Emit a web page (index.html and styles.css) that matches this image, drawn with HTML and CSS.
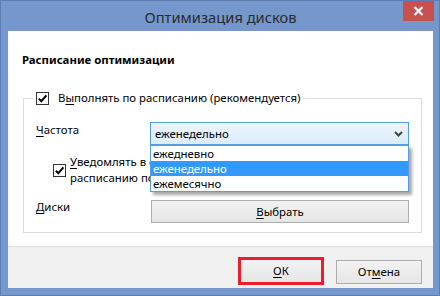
FILE: index.html
```html
<!DOCTYPE html>
<html lang="ru">
<head>
<meta charset="utf-8">
<title>Оптимизация дисков</title>
<link rel="stylesheet" href="styles.css">
</head>
<body>
<div class="window">
  <div class="titlebar">
    <span></span>
    <span class="title">Оптимизация дисков</span>
    <span class="close"><svg width="11" height="10" viewBox="0 0 11 10"><path d="M1.5 1 L9.5 9 M9.5 1 L1.5 9" stroke="#fff" stroke-width="2.2" fill="none"/></svg></span>
  </div>
  <div class="client">
    <div class="content">
      <div class="heading">Расписание оптимизации</div>
      <fieldset class="group">
        <legend class="legend">
          <span class="check"><svg width="11" height="11" viewBox="0 0 11 11"><path d="M1.8 5.6 L4.3 8.2 L9.4 2.4" stroke="#000" stroke-width="2" fill="none"/></svg></span>
          <span>В<u>ы</u>полнять по расписанию (рекомендуется)</span>
        </legend>
        <div class="grid">
          <div class="label"><u>Ч</u>астота</div>
          <div class="combo-wrap">
            <div class="combo">
              <span>еженедельно</span>
              <svg class="chev" width="9" height="6" viewBox="0 0 9 6"><path d="M1 1 L4.5 4.5 L8 1" stroke="#444" stroke-width="2" fill="none"/></svg>
            </div>
            <div class="list">
              <div class="item">ежедневно</div>
              <div class="item selected">еженедельно</div>
              <div class="item">ежемесячно</div>
            </div>
          </div>
          <div class="notify">
            <span class="check"><svg width="11" height="11" viewBox="0 0 11 11"><path d="M1.8 5.6 L4.3 8.2 L9.4 2.4" stroke="#000" stroke-width="2" fill="none"/></svg></span>
            <span class="notify-text"><u>У</u>ведомлять в случае пропуска трех выполнений по расписанию подряд</span>
          </div>
          <div class="label"><u>Д</u>иски</div>
          <div class="btn wide"><span><u>В</u>ыбрать</span></div>
        </div>
      </fieldset>
    </div>
    <div class="footer">
      <div class="btn ok"><span><u>О</u>К</span></div>
      <div class="btn cancel"><span>От<u>м</u>ена</span></div>
    </div>
  </div>
</div>
</body>
</html>
```
FILE: styles.css
```css
* { box-sizing: border-box; }
html, body { margin: 0; padding: 0; }
body {
  width: 440px;
  height: 296px;
  overflow: hidden;
  font-family: "Noto Sans", "Open Sans", sans-serif;
  font-size: 11.4px;
  color: #000;
}
.window {
  width: 440px;
  height: 296px;
  background: #7597cb;
  border: 1px solid #5b7db5;
  padding: 0 6px 7px 7px;
  display: flex;
  flex-direction: column;
}
.titlebar {
  height: 30px;
  display: grid;
  grid-template-columns: 1fr auto 1fr;
  align-items: start;
}
.title {
  font-size: 14.7px;
  line-height: 20px;
  margin-top: 6px;
  color: #2b2b2b;
  white-space: nowrap;
}
.close {
  justify-self: end;
  margin-right: -1px;
  width: 31px;
  height: 20px;
  background: #c75050;
  display: flex;
  align-items: center;
  justify-content: center;
}
.close svg { display: block; }
.client {
  flex: 1;
  background: #fff;
  display: flex;
  flex-direction: column;
}
.content {
  flex: 1;
  padding: 21px 11px 0 14px;
}
.heading {
  font-weight: bold;
  line-height: 16px;
  height: 16px;
}
.group {
  margin: 22px 0 0 1px;
  border: 1px solid #dcdcdc;
  padding: 16px 11px 9px 12px;
  min-width: 0;
}
.legend {
  margin-left: -2px;
  padding: 0 3px 0 2px;
  display: flex;
  align-items: center;
  gap: 9px;
  line-height: 16px;
}
.check {
  width: 13px;
  height: 13px;
  border: 1px solid #333;
  background: #fff;
  display: inline-flex;
  flex: none;
}
.check svg { display: block; }
u { text-decoration: underline; text-underline-offset: 2px; }
.grid {
  display: grid;
  grid-template-columns: 114px 259px;
  row-gap: 0;
}
.label { line-height: 16px; }
.combo-wrap { position: relative; }
.combo {
  height: 23px;
  border: 1px solid #569de5;
  background: linear-gradient(#ebf4fc, #dcecfc);
  display: flex;
  align-items: center;
  justify-content: space-between;
  padding: 0 5px 0 4px;
  line-height: 16px;
}
.chev { display: block; margin-top: 1px; }
.list {
  position: absolute;
  top: 23px;
  left: 0;
  width: 259px;
  background: #fff;
  border: 1px solid #569de5;
  box-shadow: 3px 3px 3px rgba(0,0,0,0.35);
  z-index: 2;
}
.item {
  height: 15px;
  line-height: 15px;
  padding-left: 2px;
}
.item.selected { background: #3399ff; color: #fff; }
.notify {
  grid-column: 1 / 3;
  display: flex;
  align-items: center;
  gap: 4px;
  margin: 9px 0 0 17px;
}
.notify-text {
  line-height: 16px;
  width: 300px;
}
.notify ~ .label { margin-top: 13px; }
.btn {
  border: 1px solid #adadad;
  background: linear-gradient(#f2f2f2, #e6e6e6);
  display: flex;
  align-items: center;
  justify-content: center;
  line-height: 16px;
}
.btn.wide {
  margin-top: 14px;
  height: 23px;
  margin-left: 1px;
}
.footer {
  height: 42px;
  border-top: 1px solid #dfdfdf;
  background: #f0f0f0;
  display: flex;
  justify-content: flex-end;
  align-items: flex-start;
  gap: 12px;
  padding: 10px 11px 0 0;
}
.btn.ok {
  width: 86px;
  height: 28px;
  border: 3px solid #e8202b;
  background: linear-gradient(#f2f2f2, #e6e6e6);
}
.btn.cancel {
  width: 86px;
  height: 24px;
  margin-top: 3px;
}
```
